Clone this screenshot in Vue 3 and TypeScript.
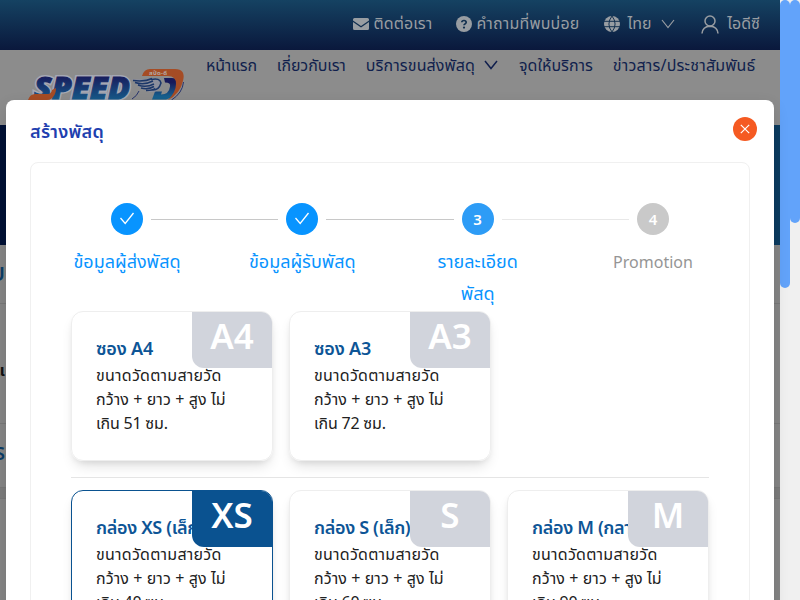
<script setup lang="ts">
interface Pack { name: string; badge: string; size: number; active?: boolean }
const envelopes: Pack[] = [
  { name: 'ซอง A4', badge: 'A4', size: 51 },
  { name: 'ซอง A3', badge: 'A3', size: 72 },
]
const boxes: Pack[] = [
  { name: 'กล่อง XS (เล็ก)', badge: 'XS', size: 40, active: true },
  { name: 'กล่อง S (เล็ก)', badge: 'S', size: 60 },
  { name: 'กล่อง M (กลาง)', badge: 'M', size: 90 },
]
const groups = [envelopes, boxes]
const steps = [
  { lines: ['ข้อมูลผู้ส่งพัสดุ'], state: 'done' },
  { lines: ['ข้อมูลผู้รับพัสดุ'], state: 'done' },
  { lines: ['รายละเอียด', 'พัสดุ'], state: 'current' },
  { lines: ['Promotion'], state: 'wait' },
]
</script>

<template>
  <div class="screen">
    <div class="page">
      <header class="topbar">
        <span class="top-item contact">
          <svg width="16" height="12" viewBox="0 0 16 12"><path fill="currentColor" d="M1.5 0h13Q16 0 16 1.5v1L8 8 0 2.500v-1Q0 0 1.500 0zM0 4l8 5.500L16 4v6.500q0 1.500-1.500 1.500h-13Q0 12 0 10.500z" /></svg>
          <span class="t">ติดต่อเรา</span>
        </span>
        <span class="top-item faq">
          <svg width="16" height="16" viewBox="0 0 16 16"><circle cx="8" cy="8" r="8" fill="currentColor" /><path d="M5.800 6.300Q5.900 4.500 8 4.500t2.200 1.800Q10.200 7.300 9 7.900 8 8.400 8 9.300" fill="none" stroke="#12304f" stroke-width="1.700" /><circle cx="8" cy="11.600" r="1.100" fill="#12304f" /></svg>
          <span class="t">คำถามที่พบบ่อย</span>
        </span>
        <span class="top-item lang">
          <svg width="16" height="16" viewBox="0 0 16 16"><circle cx="8" cy="8" r="8" fill="currentColor" /><path d="M0 5.300h16M0 10.700h16M8 0Q1.800 8 8 16M8 0q6.200 8 0 16" fill="none" stroke="#13304f" stroke-width="1" /></svg>
          <span class="t">ไทย</span>
          <svg width="14" height="10" viewBox="0 0 14 10"><path d="M1 1l6 7.500L13 1" fill="none" stroke="currentColor" stroke-width="1.200" /></svg>
        </span>
        <span class="top-item user">
          <svg width="18" height="19" viewBox="0 0 18 19"><circle cx="9" cy="6" r="5" fill="none" stroke="currentColor" stroke-width="1.500" /><path d="M1 18.500Q1.500 11.500 9 11.200 16.500 11.500 17 18.500" fill="none" stroke="currentColor" stroke-width="1.500" /></svg>
          <span class="t">ไอดีซี</span>
        </span>
      </header>
      <nav class="nav">
        <svg class="logo" width="160" height="34" viewBox="0 0 160 34">
          <defs><linearGradient id="ink" x1="0" y1="0" x2="0" y2="1"><stop offset=".2" stop-color="#17195a" /><stop offset=".85" stop-color="#17608e" /></linearGradient></defs>
          <text x="7" y="32" font-size="30" textLength="96" lengthAdjust="spacingAndGlyphs" class="word halo">SPEED</text>
          <text x="7" y="32" font-size="30" textLength="96" lengthAdjust="spacingAndGlyphs" class="word ink">SPEED</text>
          <path d="M1 33q2-6 7-6h13q3 0 4-4l4-2q0 6-3 9-2 3-6 3z" fill="#a54c25" />
          <path d="M105 32q5-3 7-8" fill="none" stroke="#27336c" stroke-width="1" />
          <path d="M137 11h8q8 0 6 9-2 10-12 12.500h-14l3-8h7l-1 3q8 0 9-8 1-4-5-4z" fill="url(#ink)" />
          <path d="M115 9q2-7 8-7h25q11 0 8 12-3 13-15 19 8-8 8-16 0-8-8-8z" fill="#a54c25" />
          <path d="M156.500 15q-1 11-12 18" fill="none" stroke="#27336c" stroke-width="1" />
          <path d="M105 12q8 11 18 13 9 1 12-8-1-7-10-6-10 2-20 1z" fill="#8c8f9c" />
          <path d="M106 13.500q12 1.500 19-2M108 15.500q9 3 18-1.500M111 18q8 3 16-1M114 21q7 2 13-1.500M119 23.500q7 0 9-2M124 12.500q9-2 10 3.500-2 7-8 7" fill="none" stroke="#1c3768" stroke-width="1.500" />
          <text x="122" y="8" font-size="6" font-weight="700" fill="#b5aaa5" textLength="18">สปีด-ดี</text>
        </svg>
        <span class="n1">หน้าแรก</span><span class="n2">เกี่ยวกับเรา</span>
        <span class="n3">บริการขนส่งพัสดุ</span>
        <svg class="nav-chev" width="14" height="10" viewBox="0 0 14 10"><path d="M1 1l6 7.500L13 1" fill="none" stroke="currentColor" stroke-width="1.500" /></svg>
        <span class="n4">จุดให้บริการ</span><span class="n5">ข่าวสาร/ประชาสัมพันธ์</span>
      </nav>
      <div class="banner"></div>
      <div class="body">
        <div class="row r1">U</div>
        <div class="row r2">แ</div>
        <div class="row r3">S</div>
        <div class="row r4"></div>
      </div>
    </div>

    <section class="modal">
      <div class="modal-head">
        <h1>สร้างพัสดุ</h1>
        <button class="close" aria-label="close"><svg width="10" height="10" viewBox="0 0 10 10"><path d="M.8.8l8.400 8.400M9.200.8L.8 9.200" stroke="#fff" stroke-width="1.200" /></svg></button>
      </div>
      <div class="panel">
        <div class="track">
          <template v-for="(s, i) in steps" :key="i">
            <i v-if="i > 0" class="line" :class="{ faint: i === 3 }"></i>
            <span class="dot" :class="s.state">
              <svg v-if="s.state === 'done'" width="16" height="14" viewBox="0 0 16 14"><path d="M1.500 6l4.700 5.500L14.500 1" fill="none" stroke="#fff" stroke-width="1.300" /></svg>
              <template v-else>{{ i + 1 }}</template>
            </span>
          </template>
        </div>
        <div class="labels">
          <div v-for="(s, i) in steps" :key="i" class="label" :class="s.state"><div v-for="l in s.lines" :key="l">{{ l }}</div></div>
        </div>
        <div v-for="(g, gi) in groups" :key="gi" class="grid">
          <article v-for="p in g" :key="p.badge" class="card" :class="{ active: p.active }">
            <h2>{{ p.name }}</h2>
            <p>ขนาดวัดตามสายวัด</p>
            <p class="dims">กว้าง + ยาว + สูง ไม่</p>
            <p class="max">เกิน {{ p.size }} ซม.</p>
            <b class="badge">{{ p.badge }}</b>
          </article>
        </div>
      </div>
    </section>
    <div class="scrolls"><i class="bar long"></i><i class="bar short"></i></div>
  </div>
</template>

<style>
body { overflow: hidden; }
</style>
<style scoped>
* { box-sizing: border-box; }
.screen { position: relative; width: 800px; height: 600px; overflow: hidden; font-family: "Noto Sans", "Noto Sans Thai", sans-serif; font-size: 16px; display: flex; }
.page { width: 780px; height: 600px; background: #858585; }
.topbar { height: 50px; background: linear-gradient(#154262, #0a183c); color: #989da2; display: flex; align-items: center; justify-content: flex-end; padding: 0 20px 2px 0; }
.top-item { display: flex; align-items: center; gap: 4px; white-space: nowrap; }
.contact .t { letter-spacing: .1px; }
.faq { margin-left: 24px; }
.faq .t { letter-spacing: .2px; }
.lang { margin-left: 24px; gap: 8px; }
.lang .t { margin-right: 2px; letter-spacing: -.1px; }
.user { margin-left: 26px; gap: 8px; }
.nav { height: 75px; background: #8c8c8c; color: #101f4d; display: flex; padding-left: 27px; white-space: nowrap; line-height: 30px; }
.logo { margin: 17px 19px 0 0; overflow: visible; flex: none; }
.word { font-weight: 800; font-style: italic; font-family: "Open Sans", sans-serif; }
.halo { fill: #a5a8b4; stroke: #a5a8b4; stroke-width: 4px; }
.ink { fill: url(#ink); stroke: url(#ink); stroke-width: 1px; }
.n2, .n3, .n5 { margin-left: 20px; }
.n1 { letter-spacing: -.2px; }
.n2 { letter-spacing: -.1px; }
.n3 { letter-spacing: .12px; }
.n4 { margin-left: 21px; }
.n5 { letter-spacing: .2px; }
.nav-chev { margin: 10px 0 0 9px; flex: none; }
.banner { height: 120px; background: linear-gradient(90deg, #001035, #0c3c60); }
.row { border-bottom: 1px solid #787878; display: flex; justify-content: flex-end; width: 780px; padding-right: 775px; white-space: nowrap; }
.r1 { height: 59px; line-height: 58px; font-size: 20px; font-weight: 600; color: #0a3c66; }
.r2 { height: 120px; line-height: 132px; font-weight: 700; color: #111; }
.r3 { height: 64px; line-height: 58px; font-size: 18px; font-weight: 600; color: #0a3c66; }
.r4 { height: 11px; background: #7c7c7c; }
.modal { position: absolute; left: 6px; top: 100px; width: 768px; height: 540px; padding: 0 24px; background: #fff; border-radius: 8px; box-shadow: 0 6px 16px rgba(0,0,0,.12); }
.modal-head { height: 62px; display: flex; align-items: center; justify-content: space-between; }
h1 { margin: 0; font-size: 18px; font-weight: 600; color: #1e40af; line-height: 28px; letter-spacing: .25px; }
.close { width: 24px; height: 24px; margin: 0 -7px 4px 0; border: 0; padding: 0; border-radius: 50%; background: #f55a22; display: flex; align-items: center; justify-content: center; }
.panel { border: 1px solid #f0f0f0; border-radius: 8px; padding: 40px 40px 0; height: 500px; }
.track { display: flex; align-items: center; gap: 8px; padding: 0 40px; }
.dot { width: 32px; height: 32px; flex: none; border-radius: 50%; background: #0894ff; color: #fff; font-size: 15px; line-height: 30px; padding-bottom: 1px; font-weight: 600; display: flex; align-items: center; justify-content: center; }
.dot.current { background: #2d9cf6; }
.dot.wait { background: #c9c9c9; }
.line { flex: 1; height: 1px; background: #c8c8c8; }
.line.faint { background: #e8e8e8; }
.labels { display: flex; justify-content: space-between; height: 76px; padding-top: 10px; }
.label { width: 112px; text-align: center; color: #0894ff; font-size: 18px; line-height: 32px; white-space: nowrap; }
.label.wait { color: #959595; font-size: 16px; line-height: 34px; }
.grid { display: grid; grid-template-columns: repeat(3, 1fr); gap: 16px; }
.grid + .grid { margin-top: 16px; padding-top: 12px; border-top: 1px solid #e5e5e5; }
.card { position: relative; height: 150px; padding: 22px 24px 24px; border: 1px solid #eee; border-radius: 12px; box-shadow: 0 8px 14px -4px rgba(0,0,0,.14), 0 3px 6px -2px rgba(0,0,0,.08); white-space: nowrap; color: #212121; }
.card.active { border-color: #0a5290; }
h2 { margin: 0 0 1px; font-size: 18px; line-height: 28px; font-weight: 600; color: #0d5596; letter-spacing: -.2px; }
.grid + .grid h2 { letter-spacing: -.35px; }
p { margin: 0; line-height: 24px; letter-spacing: .25px; }
.dims { letter-spacing: .1px; }
.max { letter-spacing: -.2px; }
.badge { position: absolute; right: 0; top: 0; width: 80px; height: 56px; background: #d1d4dc; color: #fff; border-radius: 0 11px 0 12px; font-size: 35px; line-height: 48px; text-align: center; font-weight: 600; }
.active .badge { background: #0a5290; }
.scrolls { width: 20px; background: #f0f0f0; display: flex; }
.bar { width: 10px; background: #62a3fa; border-radius: 5px; height: 288px; }
.bar.short { height: 223px; }
</style>
